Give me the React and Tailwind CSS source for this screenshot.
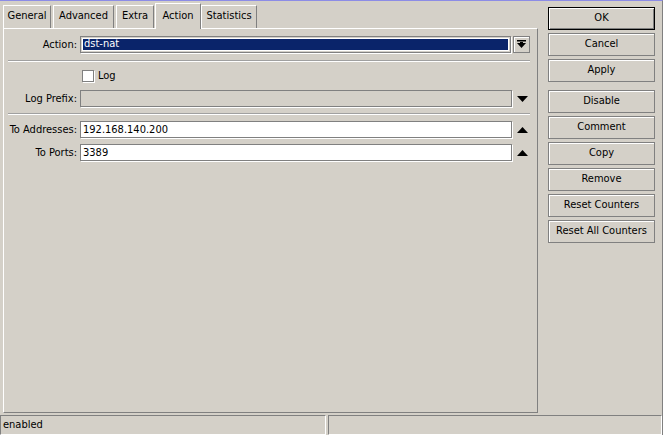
import React from 'react';

const font = { fontFamily: '"DejaVu Sans Condensed", "Liberation Sans", Arial, sans-serif' };

const tabs = [
  { label: 'General', w: 'w-[48px]', ml: 'ml-0' },
  { label: 'Advanced', w: 'w-[61px]', ml: 'ml-[2px]' },
  { label: 'Extra', w: 'w-[38px]', ml: 'ml-[2px]' },
  { label: 'Action', w: 'w-[46px]', ml: 'ml-[1px]', active: true },
  { label: 'Statistics', w: 'w-[56px]', ml: 'ml-0' },
];

const buttons = [
  { label: 'OK', def: true },
  { label: 'Cancel' },
  { label: 'Apply', mb: true },
  { label: 'Disable' },
  { label: 'Comment' },
  { label: 'Copy' },
  { label: 'Remove' },
  { label: 'Reset Counters' },
  { label: 'Reset All Counters' },
];

function UpArrow() {
  return (
    <svg width="11" height="6" viewBox="0 0 11 6">
      <path d="M5.5 0 L11 6 L0 6 Z" fill="#000" />
    </svg>
  );
}

function DownArrow() {
  return (
    <svg width="11" height="6" viewBox="0 0 11 6">
      <path d="M0 0 L11 0 L5.5 6 Z" fill="#000" />
    </svg>
  );
}

function Separator({ mt }) {
  return <div className={`${mt} ml-[4px] w-[522px] h-[2px] border-t border-t-[#a0a0a0] border-b border-b-white`} />;
}

function Label({ children }) {
  return <div className="w-[74px] shrink-0 text-right pr-[1px] leading-[17px] whitespace-nowrap">{children}</div>;
}

function Field({ label, value, mt, disabled, arrow }) {
  return (
    <div className={`flex items-center h-[17px] ${mt}`}>
      <Label>{label}</Label>
      <div
        className={`ml-[2px] w-[432px] h-[17px] border border-[#808080] shadow-[1px_1px_0_#fff] px-[2px] leading-[15px] ${
          disabled ? 'bg-[#d4d0c8]' : 'bg-white'
        }`}
      >
        {value}
      </div>
      <div className="w-[17px] ml-[2px] flex justify-center">
        {arrow === 'up' ? <UpArrow /> : <DownArrow />}
      </div>
    </div>
  );
}

export default function App() {
  return (
    <div
      className="w-[663px] h-[435px] bg-[#d4d0c8] text-black text-[11px] flex flex-col border-t border-t-[#8c8ce6] border-r border-r-[#808080] overflow-hidden"
      style={font}
    >
      <div className="flex h-[412px]">
        {/* Left: tabs + panel */}
        <div className="flex flex-col pl-[3px] w-[538px]">
          <div className="flex items-end h-[27px]">
            {tabs.map((t) => (
              <div
                key={t.label}
                className={`${t.w} ${t.ml} ${
                  t.active ? 'relative z-10 -mb-[1px] h-[26px]' : 'h-[23px]'
                } border-t border-l border-t-white border-l-white border-r border-r-[#808080] bg-[#d4d0c8] flex items-center justify-center pb-[1px] whitespace-nowrap`}
              >
                {t.label}
              </div>
            ))}
          </div>
          <div className="flex-1 border-t border-l border-t-white border-l-white border-r border-b border-r-[#808080] border-b-[#808080] flex flex-col">
            {/* Action */}
            <div className="flex items-center h-[17px] mt-[7px]">
              <Label>Action:</Label>
              <div className="ml-[2px] w-[431px] h-[17px] border border-[#808080] shadow-[1px_1px_0_#fff] p-[1px]">
                <div className="w-full h-full bg-[#0a246a] border border-white text-white px-[1px] flex items-center">
                  dst-nat
                </div>
              </div>
              <div className="ml-[2px] w-[17px] h-[17px] border border-[#808080] shadow-[inset_1px_1px_0_#fff] flex items-center justify-center">
                <svg width="9" height="9" viewBox="0 0 9 9">
                  <rect x="0" y="0" width="9" height="1.5" fill="#000" />
                  <path d="M0 3 L9 3 L4.5 8 Z" fill="#000" />
                  <rect x="3" y="2" width="3" height="3" fill="#000" />
                </svg>
              </div>
            </div>

            <Separator mt="mt-[7px]" />

            {/* Log */}
            <div className="flex items-center h-[13px] mt-[7px]">
              <div className="w-[74px] shrink-0" />
              <div className="ml-[4px] w-[12px] h-[12px] bg-white border border-[#808080] shadow-[1px_1px_0_#fff]" />
              <span className="ml-[4px] leading-[13px]">Log</span>
            </div>

            <Field label="Log Prefix:" value="" mt="mt-[8px]" disabled arrow="down" />

            <Separator mt="mt-[6px]" />

            <Field label="To Addresses:" value="192.168.140.200" mt="mt-[6px]" arrow="up" />
            <Field label="To Ports:" value="3389" mt="mt-[6px]" arrow="up" />
          </div>
        </div>

        {/* Right: buttons */}
        <div className="ml-[10px] pt-[6px] flex flex-col w-[107px]">
          {buttons.map((b) => (
            <div
              key={b.label}
              className={`h-[23px] w-[107px] flex items-center justify-center bg-[#d4d0c8] whitespace-nowrap ${
                b.def
                  ? 'border border-black shadow-[inset_1px_1px_0_#fff,inset_-1px_-1px_0_#808080]'
                  : 'border border-[#808080] shadow-[inset_1px_1px_0_#fff]'
              } ${b.mb ? 'mb-[8px]' : 'mb-[3px]'}`}
            >
              {b.label}
            </div>
          ))}
        </div>
      </div>

      {/* Status bar */}
      <div className="flex h-[20px] mt-[2px]">
        <div className="w-[326px] h-full border-t border-l border-t-[#808080] border-l-[#808080] border-b border-r border-b-white border-r-white pl-[2px] leading-[18px]">
          enabled
        </div>
        <div className="ml-[2px] flex-1 h-full border-t border-l border-t-[#808080] border-l-[#808080] border-b border-r border-b-white border-r-white" />
      </div>
    </div>
  );
}
